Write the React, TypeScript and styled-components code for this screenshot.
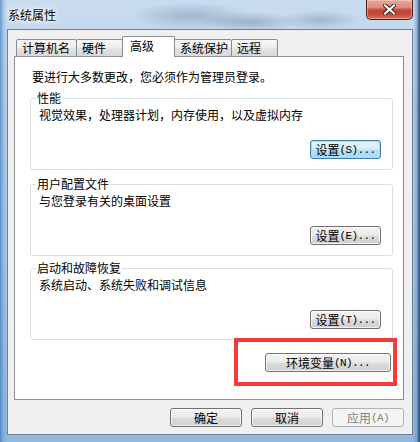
import React from "react";
import styled, { createGlobalStyle, css } from "styled-components";

const GlobalStyle = createGlobalStyle`
  html, body { margin: 0; padding: 0; background: #ffffff; }
  body {
    font-family: "Noto Sans CJK SC", "Noto Sans", sans-serif;
    font-size: 12px;
    color: #000;
  }
  * { box-sizing: border-box; }
`;

const Window = styled.div`
  width: 420px;
  height: 442px;
  display: flex;
  flex-direction: column;
  padding: 0 7px 7px 7px;
  overflow: hidden;
  background:
    linear-gradient(90deg,
      rgba(30, 95, 170, 0.55) 0,
      rgba(80, 150, 215, 0.35) 3px,
      rgba(255, 255, 255, 0) 7px,
      rgba(255, 255, 255, 0) 413px,
      rgba(70, 130, 195, 0.45) 417px,
      rgba(25, 50, 90, 0.75) 419px),
    radial-gradient(ellipse 60px 14px at 190px 16px, rgba(90, 115, 145, 0.35), rgba(90, 115, 145, 0)),
    radial-gradient(ellipse 50px 10px at 250px 22px, rgba(80, 105, 135, 0.35), rgba(80, 105, 135, 0)),
    radial-gradient(ellipse 40px 10px at 320px 20px, rgba(80, 105, 135, 0.3), rgba(80, 105, 135, 0)),
    linear-gradient(180deg, #c9dcef 0%, #bcd2ea 20%, #a9c7e5 60%, #93b8dd 100%);
`;

const TitleBar = styled.div`
  height: 29px;
  flex: none;
  display: flex;
  justify-content: space-between;
  align-items: flex-start;
`;

const Title = styled.div`
  padding: 8px 0 0 1px;
  font-size: 12px;
  line-height: 14px;
  color: #000;
  text-shadow: 0 0 4px #ffffff, 0 0 8px #ffffff, 0 0 2px #ffffff;
`;

const CloseButton = styled.div`
  width: 47px;
  height: 20px;
  display: flex;
  align-items: center;
  justify-content: center;
  border: 1px solid #4a1b15;
  border-top: none;
  border-radius: 0 0 5px 5px;
  background: linear-gradient(180deg, #e8a99c 0%, #d98b7c 40%, #c5483a 52%, #c14434 70%, #d6725e 100%);
  box-shadow: inset 0 0 0 1px rgba(255, 220, 210, 0.45);
`;

const Client = styled.div`
  flex: 1;
  display: flex;
  flex-direction: column;
  background: #f0f0f0;
  border: 1px solid #6f7f90;
  padding: 6px 8px 7px 6px;
`;

const TabStrip = styled.div`
  height: 21px;
  flex: none;
  display: flex;
  align-items: flex-end;
  padding-left: 2px;
  margin-bottom: -1px;
  position: relative;
  z-index: 1;
`;

const Tab = styled.div<{ $w: number; $active?: boolean }>`
  width: ${(p) => p.$w}px;
  margin-left: -1px;
  &:first-child { margin-left: 0; }
  border: 1px solid #898c95;
  border-radius: 2px 2px 0 0;
  font-size: 12px;
  line-height: 14px;
  white-space: nowrap;
  ${(p) =>
    p.$active
      ? css`
          height: 21px;
          border-bottom: none;
          background: #ffffff;
          padding: 2px 0 0 7px;
          position: relative;
          z-index: 2;
        `
      : css`
          height: 18px;
          display: flex;
          align-items: center;
          padding: 0 0 0 5px;
          background: linear-gradient(180deg, #f8f8f8 0%, #eeeeee 45%, #e2e2e2 55%, #d8d8d8 100%);
        `}
`;

const Panel = styled.div`
  height: 344px;
  flex: none;
  background: #ffffff;
  border: 1px solid #898c95;
  padding: 13px 10px 0 15px;
  display: flex;
  flex-direction: column;
`;

const Notice = styled.div`
  line-height: 14px;
  margin: 0 0 7px 2px;
`;

const Group = styled.fieldset<{ $mt: number }>`
  margin: ${(p) => p.$mt}px 0 0 0;
  padding: 3px 11px 10px 8px;
  border: 1px solid #d5dfe5;
  border-radius: 3px;
  min-width: 0;
`;

const Legend = styled.legend`
  padding: 0 1px;
  margin-left: -3px;
  font-size: 12px;
  line-height: 14px;
`;

const Desc = styled.div`
  line-height: 14px;
`;

const ButtonRow = styled.div<{ $mt: number; $pr?: number }>`
  display: flex;
  justify-content: flex-end;
  gap: 9px;
  margin-top: ${(p) => p.$mt}px;
  padding-right: ${(p) => p.$pr ?? 0}px;
`;

type Variant = "normal" | "focus" | "disabled";

const Button = styled.button<{ $w: number; $variant?: Variant }>`
  width: ${(p) => p.$w}px;
  height: 19px;
  padding: 0;
  margin: 0;
  display: inline-flex;
  align-items: center;
  justify-content: center;
  font-family: "Noto Sans CJK SC", "Noto Sans", sans-serif;
  font-size: 12px;
  line-height: 14px;
  color: #000;
  border-radius: 3px;
  white-space: nowrap;
  ${(p) =>
    p.$variant === "focus"
      ? css`
          border: 1px solid #3c7fb1;
          background: linear-gradient(180deg, #e5f4fc 0%, #d4edfb 48%, #b9e1f8 52%, #a7d6f3 100%);
          box-shadow: inset 0 0 0 1px #a8dbf6, inset 0 0 2px 1px rgba(255, 255, 255, 0.6);
        `
      : p.$variant === "disabled"
      ? css`
          border: 1px solid #adb2b5;
          background: #f4f4f4;
          color: #838383;
        `
      : css`
          border: 1px solid #707070;
          background: linear-gradient(180deg, #f2f2f2 0%, #ebebeb 48%, #dddddd 52%, #cfcfcf 100%);
          box-shadow: inset 0 0 0 1px rgba(255, 255, 255, 0.7);
        `}
`;

const Mn = styled.span`
  font-family: "Liberation Mono", monospace;
  font-size: 11px;
  letter-spacing: -0.6px;
`;

const Annotated = styled.div`
  position: relative;
  &::after {
    content: "";
    position: absolute;
    top: -15px;
    right: -6px;
    bottom: -14px;
    left: -31px;
    border: 4px solid #f23c3c;
    pointer-events: none;
  }
`;

const tabs = [
  { label: "计算机名", w: 61 },
  { label: "硬件", w: 47 },
  { label: "高级", w: 53, active: true },
  { label: "系统保护", w: 58 },
  { label: "远程", w: 47 },
];

const groups = [
  { title: "性能", desc: "视觉效果，处理器计划，内存使用，以及虚拟内存", key: "S", mt: 0, focus: true },
  { title: "用户配置文件", desc: "与您登录有关的桌面设置", key: "E", mt: 7 },
  { title: "启动和故障恢复", desc: "系统启动、系统失败和调试信息", key: "T", mt: 5 },
];

export default function App() {
  return (
    <>
      <GlobalStyle />
      <Window>
        <TitleBar>
          <Title>系统属性</Title>
          <CloseButton>
            <svg width="13" height="11" viewBox="0 0 13 11">
              <path d="M2 1.5 L11 9.5 M11 1.5 L2 9.5" stroke="#3a1a14" strokeWidth="4" strokeLinecap="square" />
              <path d="M2 1.5 L11 9.5 M11 1.5 L2 9.5" stroke="#ffffff" strokeWidth="2.2" strokeLinecap="square" />
            </svg>
          </CloseButton>
        </TitleBar>
        <Client>
          <TabStrip>
            {tabs.map((t) => (
              <Tab key={t.label} $w={t.w} $active={t.active}>
                {t.label}
              </Tab>
            ))}
          </TabStrip>
          <Panel>
            <Notice>要进行大多数更改，您必须作为管理员登录。</Notice>
            {groups.map((g) => (
              <Group key={g.title} $mt={g.mt}>
                <Legend>{g.title}</Legend>
                <Desc>{g.desc}</Desc>
                <ButtonRow $mt={18}>
                  <Button $w={71} $variant={g.focus ? "focus" : "normal"}>
                    设置<Mn>({g.key})...</Mn>
                  </Button>
                </ButtonRow>
              </Group>
            ))}
            <ButtonRow $mt={13} $pr={2}>
              <Annotated>
                <Button $w={126}>
                  环境变量<Mn>(N)...</Mn>
                </Button>
              </Annotated>
            </ButtonRow>
          </Panel>
          <ButtonRow $mt={8}>
            <Button $w={72}>确定</Button>
            <Button $w={72}>取消</Button>
            <Button $w={72} $variant="disabled">
              应用<Mn>(A)</Mn>
            </Button>
          </ButtonRow>
        </Client>
      </Window>
    </>
  );
}
